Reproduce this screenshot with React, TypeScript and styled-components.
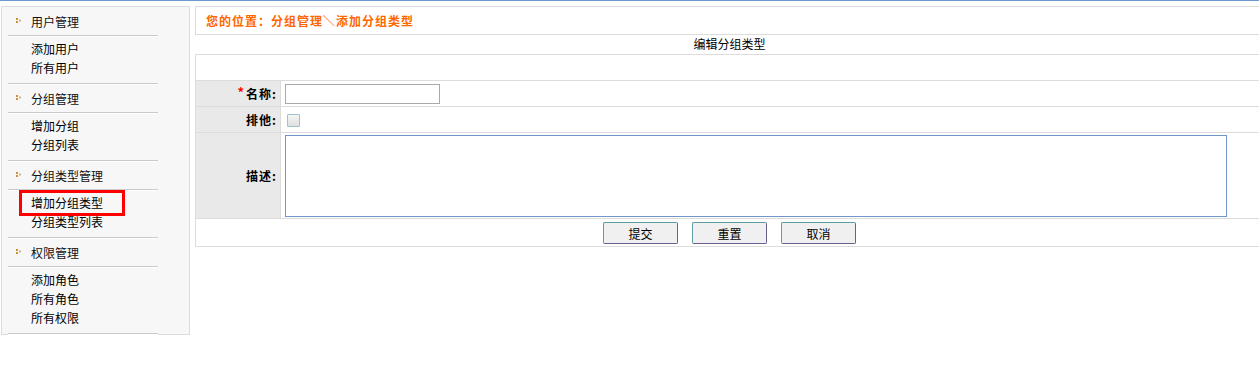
import React from "react";
import styled, { createGlobalStyle } from "styled-components";

const GlobalStyle = createGlobalStyle`
  html, body {
    margin: 0;
    padding: 0;
    background: #fff;
    overflow: hidden;
  }
  body {
    font-family: "Noto Sans CJK SC", "Noto Sans", sans-serif;
    font-size: 12px;
    color: #000;
  }
  *, *::before, *::after { box-sizing: border-box; }
`;

const Page = styled.div`
  border-top: 1px solid #6c9bd2;
`;

const Layout = styled.div`
  display: flex;
  align-items: flex-start;
  padding-top: 5px;
`;

const Sidebar = styled.nav`
  width: 189px;
  margin-left: 1px;
  flex-shrink: 0;
  background: #f7f7f7;
  border: 1px solid #dcdcdc;
`;

const Heading = styled.div`
  display: flex;
  align-items: center;
  height: 28px;
  padding-left: 14px;
  font-size: 12px;
  color: #111;
`;

const HeadingIcon = styled.svg`
  width: 6px;
  height: 6px;
  margin-right: 9px;
  flex-shrink: 0;
`;

const Separator = styled.div`
  height: 1px;
  width: 150px;
  margin-left: 6px;
  background: #cacaca;
  box-shadow: 0 1px 0 #ffffff;
`;

const Items = styled.div`
  padding: 3px 0 6px;
`;

const Item = styled.div<{ $highlighted?: boolean }>`
  position: relative;
  height: 19px;
  line-height: 19px;
  padding-left: 29px;
  font-size: 12px;
  color: #000;
  ${(p) =>
    p.$highlighted &&
    `
    &::after {
      content: "";
      position: absolute;
      left: 17px;
      top: -3px;
      width: 106px;
      height: 26px;
      border: 3px solid #f00;
    }
  `}
`;

const Main = styled.main`
  flex: 1;
  margin-left: 5px;
  margin-right: -5px;
`;

const Location = styled.div`
  height: 29px;
  line-height: 27px;
  border: 1px solid #dcdcdc;
  padding-left: 10px;
  color: #ff6600;
  font-weight: bold;
  letter-spacing: 1px;
`;

const Title = styled.div`
  height: 19px;
  line-height: 18px;
  text-align: center;
  color: #000;
`;

const FormGrid = styled.div`
  display: grid;
  grid-template-columns: 85px 1fr;
  border-top: 1px solid #dcdcdc;
  border-left: 1px solid #dcdcdc;
`;

const Cell = styled.div<{ $h: number }>`
  height: ${(p) => p.$h}px;
  border-right: 1px solid #dcdcdc;
  border-bottom: 1px solid #dcdcdc;
`;

const FullCell = styled(Cell)`
  grid-column: 1 / span 2;
`;

const LabelCell = styled(Cell)`
  background: #e9e9e9;
  display: flex;
  align-items: center;
  justify-content: flex-end;
  padding-right: 3px;
  font-weight: bold;
  letter-spacing: 1px;
  color: #000;
`;

const Required = styled.span`
  color: #f00;
  font-weight: bold;
  font-size: 13px;
  position: relative;
  top: -2px;
  margin-right: 1px;
`;

const ValueCell = styled(Cell)<{ $top?: boolean }>`
  display: flex;
  align-items: ${(p) => (p.$top ? "flex-start" : "center")};
  padding-left: 4px;
  padding-top: ${(p) => (p.$top ? "2px" : "0")};
`;

const TextInput = styled.input`
  width: 155px;
  height: 20px;
  border: 1px solid #a9a9a9;
  padding: 1px 3px;
  font-size: 12px;
  margin: 0;
  outline: none;
`;

const Check = styled.input`
  appearance: none;
  -webkit-appearance: none;
  width: 13px;
  height: 13px;
  margin: 1px 0 0 2px;
  border: 1px solid #a2c0cb;
  border-radius: 1px;
  background: linear-gradient(#f5f5f5, #dfdfdf);
`;

const TextArea = styled.textarea`
  width: 942px;
  height: 82px;
  border: 1px solid #7096c8;
  margin: 0;
  padding: 2px;
  resize: none;
  outline: none;
  font-size: 12px;
  font-family: inherit;
`;

const ButtonRow = styled(FullCell)`
  display: flex;
  justify-content: center;
  align-items: flex-start;
  gap: 14px;
  padding-top: 3px;
`;

const Button = styled.button`
  width: 75px;
  height: 22px;
  margin: 0;
  padding: 0;
  background: #f0f0f0;
  border: 1px solid;
  border-color: #5f9ea0 #6b5f8f #6b5f8f #5f9ea0;
  border-radius: 2px;
  font-family: inherit;
  font-size: 12px;
  color: #000;
`;

const Dots = () => (
  <HeadingIcon viewBox="0 0 6 6">
    <rect x="0" y="0" width="2" height="2" fill="#d4902a" />
    <rect x="0" y="3" width="2" height="2" fill="#d4902a" />
    <rect x="3" y="1.5" width="2" height="2" fill="#c9b79a" />
  </HeadingIcon>
);

const groups: { title: string; items: string[] }[] = [
  { title: "用户管理", items: ["添加用户", "所有用户"] },
  { title: "分组管理", items: ["增加分组", "分组列表"] },
  { title: "分组类型管理", items: ["增加分组类型", "分组类型列表"] },
  { title: "权限管理", items: ["添加角色", "所有角色", "所有权限"] },
];

export default function App() {
  return (
    <Page>
      <GlobalStyle />
      <Layout>
        <Sidebar>
          {groups.map((g) => (
            <React.Fragment key={g.title}>
              <Heading>
                <Dots />
                {g.title}
              </Heading>
              <Separator />
              <Items>
                {g.items.map((it) => (
                  <Item key={it} $highlighted={it === "增加分组类型"}>
                    {it}
                  </Item>
                ))}
              </Items>
              <Separator />
            </React.Fragment>
          ))}
        </Sidebar>
        <Main>
          <Location>您的位置：分组管理＼添加分组类型</Location>
          <Title>编辑分组类型</Title>
          <FormGrid>
            <FullCell $h={26} />
            <LabelCell $h={26}>
              <Required>*</Required>名称:
            </LabelCell>
            <ValueCell $h={26}>
              <TextInput type="text" />
            </ValueCell>
            <LabelCell $h={26}>排他:</LabelCell>
            <ValueCell $h={26}>
              <Check type="checkbox" />
            </ValueCell>
            <LabelCell $h={86}>描述:</LabelCell>
            <ValueCell $h={86} $top>
              <TextArea />
            </ValueCell>
            <ButtonRow $h={28}>
              <Button>提交</Button>
              <Button>重置</Button>
              <Button>取消</Button>
            </ButtonRow>
          </FormGrid>
        </Main>
      </Layout>
    </Page>
  );
}
